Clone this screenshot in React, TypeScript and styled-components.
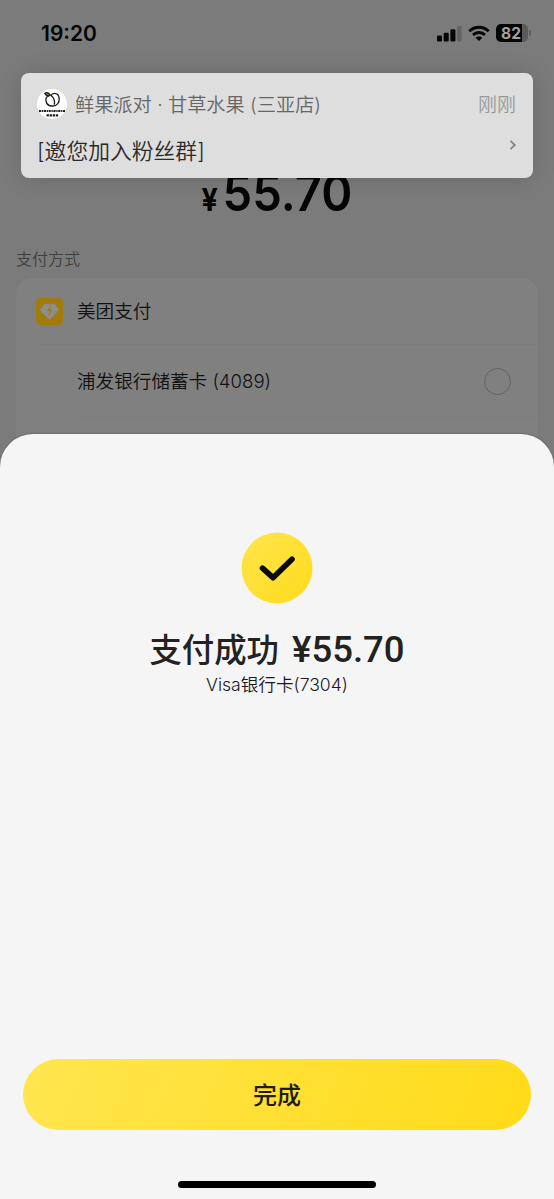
import React from "react";
import styled, { createGlobalStyle } from "styled-components";

const GlobalStyle = createGlobalStyle`
  * { box-sizing: border-box; }
  body {
    margin: 0;
    background: #7b7b7b;
    font-family: Inter, "Noto Sans CJK SC", sans-serif;
    font-weight: 350;
    -webkit-font-smoothing: antialiased;
  }
`;

const Screen = styled.div`
  position: relative;
  width: 554px;
  height: 1199px;
  overflow: hidden;
  background: #7b7b7b;
`;

const StatusBar = styled.header`
  display: flex;
  align-items: center;
  justify-content: space-between;
  height: 68px;
  padding: 0 23px 2px 41px;
`;

const Clock = styled.span`
  padding-top: 1px;
  font-size: 21px;
  font-weight: 600;
  line-height: 26px;
  color: #050505;
`;

const Indicators = styled.div`
  display: flex;
  align-items: center;
  gap: 6px;
`;

const Battery = styled.div`
  display: flex;
  align-items: center;
  gap: 1px;
`;

const BatteryBody = styled.div`
  width: 32px;
  height: 18px;
  border-radius: 5px;
  background: linear-gradient(90deg, #050505 0 26px, #5a5a5a 26px);
  color: #a2a2a2;
  font-size: 15.5px;
  font-weight: 700;
  line-height: 19px;
  padding-right: 2px;
  text-align: center;
`;

const BatteryCap = styled.div`
  width: 2px;
  height: 6px;
  border-radius: 0 2px 2px 0;
  background: #5c5c5c;
`;

const Amount = styled.div`
  display: flex;
  align-items: baseline;
  justify-content: center;
  gap: 5px;
  margin-top: 96px;
  height: 58px;
  line-height: 58px;
  font-size: 51px;
  font-weight: 600;
  color: #050505;
  transform: scaleX(0.925);
`;

const Currency = styled.span`
  padding-bottom: 1px;
  font-size: 31px;
  font-weight: 700;
`;

const SectionLabel = styled.div`
  margin: 25px 0 0 16px;
  height: 24px;
  font-size: 16px;
  line-height: 24px;
  color: #404040;
`;

const MethodCard = styled.section`
  margin: 7px 16px 0;
  height: 220px;
  padding: 0 0 0 20px;
  border-radius: 16px;
  background: #808080;
`;

const MethodRow = styled.div<{ $height: number; $inset?: number }>`
  display: flex;
  align-items: center;
  height: ${(p) => p.$height}px;
  margin-left: ${(p) => p.$inset ?? 0}px;
  padding-right: 27px;
  border-bottom: 1px solid #7c7c7c;
  font-size: 18.6px;
  color: #111;
`;

const MethodName = styled.span`
  line-height: 26px;
`;

const MethodLogo = styled.svg`
  width: 27px;
  height: 27px;
  margin-right: 14px;
`;

const Radio = styled.span`
  width: 27px;
  height: 27px;
  margin: 1px 0 0 auto;
  border: 1.4px solid #646464;
  border-radius: 50%;
`;

const Banner = styled.aside`
  position: absolute;
  top: 73px;
  left: 21px;
  width: 512px;
  height: 105px;
  padding: 16px 17px 0 16px;
  border-radius: 8px;
  background: #dedede;
  box-shadow: 0 1px 24px rgba(0, 0, 0, 0.14);
`;

const BannerHead = styled.div`
  display: flex;
  align-items: center;
  height: 30px;
`;

const Avatar = styled.svg`
  width: 30px;
  height: 30px;
  margin-right: 8px;
`;

const ShopName = styled.span`
  flex: 1;
  padding-top: 1px;
  font-size: 19.2px;
  line-height: 28px;
  color: #666;
`;

const TimeAgo = styled.span`
  padding-top: 3px;
  font-size: 19px;
  line-height: 28px;
  color: #999;
`;

const BannerBody = styled.div`
  display: flex;
  justify-content: space-between;
  align-items: center;
  margin-top: 17px;
  height: 30px;
  font-size: 21.8px;
  line-height: 30px;
  color: #2a2a2a;
`;

const Chevron = styled.svg`
  width: 8px;
  height: 12px;
  margin: 0 -1px 13px 0;
`;

const Sheet = styled.main`
  position: absolute;
  left: 0;
  right: 0;
  bottom: 0;
  height: 765px;
  display: flex;
  flex-direction: column;
  align-items: center;
  padding: 98px 23px 11px;
  border-radius: 33px 33px 0 0;
  background: #f5f5f5;
  box-shadow: 0 -1px 2px rgba(0, 0, 0, 0.15);
`;

const SuccessIcon = styled.svg`
  width: 72px;
  height: 72px;
`;

const SuccessTitle = styled.h1`
  display: flex;
  align-items: baseline;
  gap: 13px;
  margin: 24px 0 0;
  height: 44px;
  font-size: 32.4px;
  line-height: 44px;
  font-weight: 500;
  color: #222;
`;

const Paid = styled.span`
  font-family: Roboto, sans-serif;
  font-size: 36.5px;
  font-weight: 500;
`;

const CardName = styled.p`
  margin: 0;
  height: 26px;
  font-size: 17.6px;
  line-height: 26px;
  color: #1a1a1a;
`;

const DoneButton = styled.button`
  width: 508px;
  height: 71px;
  margin-top: auto;
  padding: 0 0 2px;
  border: 0;
  border-radius: 36px;
  background: linear-gradient(115deg, #ffe650 0%, #ffe034 50%, #ffdb18 100%);
  font-family: inherit;
  font-size: 24px;
  font-weight: 500;
  color: #221c05;
`;

const HomeIndicator = styled.div`
  width: 198px;
  height: 7px;
  margin-top: 51px;
  border-radius: 4px;
  background: #000;
`;

function SignalIcon() {
  return (
    <svg width="25" height="17" viewBox="0 0 25 17">
      <rect x="0" y="10.5" width="5" height="6" rx="1.3" fill="#050505" />
      <rect x="6.7" y="7.7" width="5" height="8.8" rx="1.3" fill="#050505" />
      <rect x="13.4" y="4.3" width="5" height="12.2" rx="1.3" fill="#050505" />
      <rect x="20.1" y="1" width="4.5" height="15.5" rx="1.3" fill="#636363" />
    </svg>
  );
}

function WifiIcon() {
  return (
    <svg width="22" height="17" viewBox="0 0 22 17" fill="none" stroke="#050505" strokeWidth="2.8">
      <path d="M1.3 6.2C6.8.9 15.2.9 20.7 6.2" />
      <path d="M5 9.9c3.5-3.2 8.5-3.2 12 0" />
      <path d="M11 11.4c-1.3 0-2.5.5-3.3 1.3L11 16.1l3.3-3.4c-.8-.8-2-1.3-3.3-1.3z" fill="#050505" stroke="none" />
    </svg>
  );
}

export default function App() {
  return (
    <>
      <GlobalStyle />
      <Screen>
        <StatusBar>
          <Clock>19:20</Clock>
          <Indicators>
            <SignalIcon />
            <WifiIcon />
            <Battery>
              <BatteryBody>82</BatteryBody>
              <BatteryCap />
            </Battery>
          </Indicators>
        </StatusBar>

        <Amount>
          <Currency>¥</Currency>
          <span>55.70</span>
        </Amount>
        <SectionLabel>支付方式</SectionLabel>
        <MethodCard>
          <MethodRow $height={67}>
            <MethodLogo viewBox="0 0 27 27">
              <rect width="27" height="27" rx="4.5" fill="#a17c0c" />
              <path
                d="M8.3 6.3h4.200l1 1 1-1h4.100l3.700 6-8.900 9.200-9-9.200z"
                fill="#8e8e8a"
                stroke="#8e8e8a"
                strokeLinejoin="round"
              />
              <path d="M15.900 6.200l-5.100 6.600 2.700.6-2 5.400 4.800-6.700-2.500-.7z" fill="#a17c0c" />
            </MethodLogo>
            <MethodName>美团支付</MethodName>
          </MethodRow>
          <MethodRow $height={73} $inset={41}>
            <MethodName>浦发银行储蓄卡 (4089)</MethodName>
            <Radio />
          </MethodRow>
        </MethodCard>

        <Banner>
          <BannerHead>
            <Avatar viewBox="0 0 30 30">
              <circle cx="15" cy="15" r="15" fill="#fff" />
              <g fill="none" stroke="#1c1c1c" strokeWidth="1.3">
                <path d="M12.500 6.500C9.800 7.300 8.500 9.500 9 12c.6 3.200 3.200 5.200 6.800 5 4-.2 6.700-3.300 6.400-7C22 6.800 20.200 4.300 17.500 4.300c-1.700 0-2.900.8-3.500 2.200 2.700 2 4.200 5 3.300 9.200" />
                <path d="M7.800 4.200c2-1.200 4.200-.6 5.500 1.900-2 1.500-4.600.6-5.500-1.900z" fill="#788f42" />
              </g>
              <path d="M2 22h26" stroke="#222" strokeWidth="2" strokeDasharray="2.200 .7 1.300 .6" />
              <path d="M9.500 26.300h12" stroke="#222" strokeWidth="2.200" strokeDasharray="2.400 .7" />
            </Avatar>
            <ShopName>鲜果派对 · 甘草水果 (三亚店)</ShopName>
            <TimeAgo>刚刚</TimeAgo>
          </BannerHead>
          <BannerBody>
            [邀您加入粉丝群]
            <Chevron viewBox="0 0 8 12" fill="none" stroke="#858585" strokeWidth="1.800">
              <path d="M1.500 1.800L5.800 6 1.500 10.200" />
            </Chevron>
          </BannerBody>
        </Banner>

        <Sheet>
          <SuccessIcon viewBox="0 0 72 72">
            <defs>
              <linearGradient id="disc" x1="0" y1="0" x2="1" y2="1">
                <stop offset="0" stopColor="#ffe54c" />
                <stop offset="1" stopColor="#ffdb1c" />
              </linearGradient>
            </defs>
            <circle cx="36" cy="36" r="35.500" fill="url(#disc)" />
            <path
              d="M21.500 36.200L32 45.700 51 27.200"
              fill="none"
              stroke="#0a0a0a"
              strokeWidth="5.600"
              strokeLinecap="round"
              strokeLinejoin="round"
            />
          </SuccessIcon>
          <SuccessTitle>
            支付成功
            <Paid>¥55.70</Paid>
          </SuccessTitle>
          <CardName>Visa银行卡(7304)</CardName>
          <DoneButton>完成</DoneButton>
          <HomeIndicator />
        </Sheet>
      </Screen>
    </>
  );
}
